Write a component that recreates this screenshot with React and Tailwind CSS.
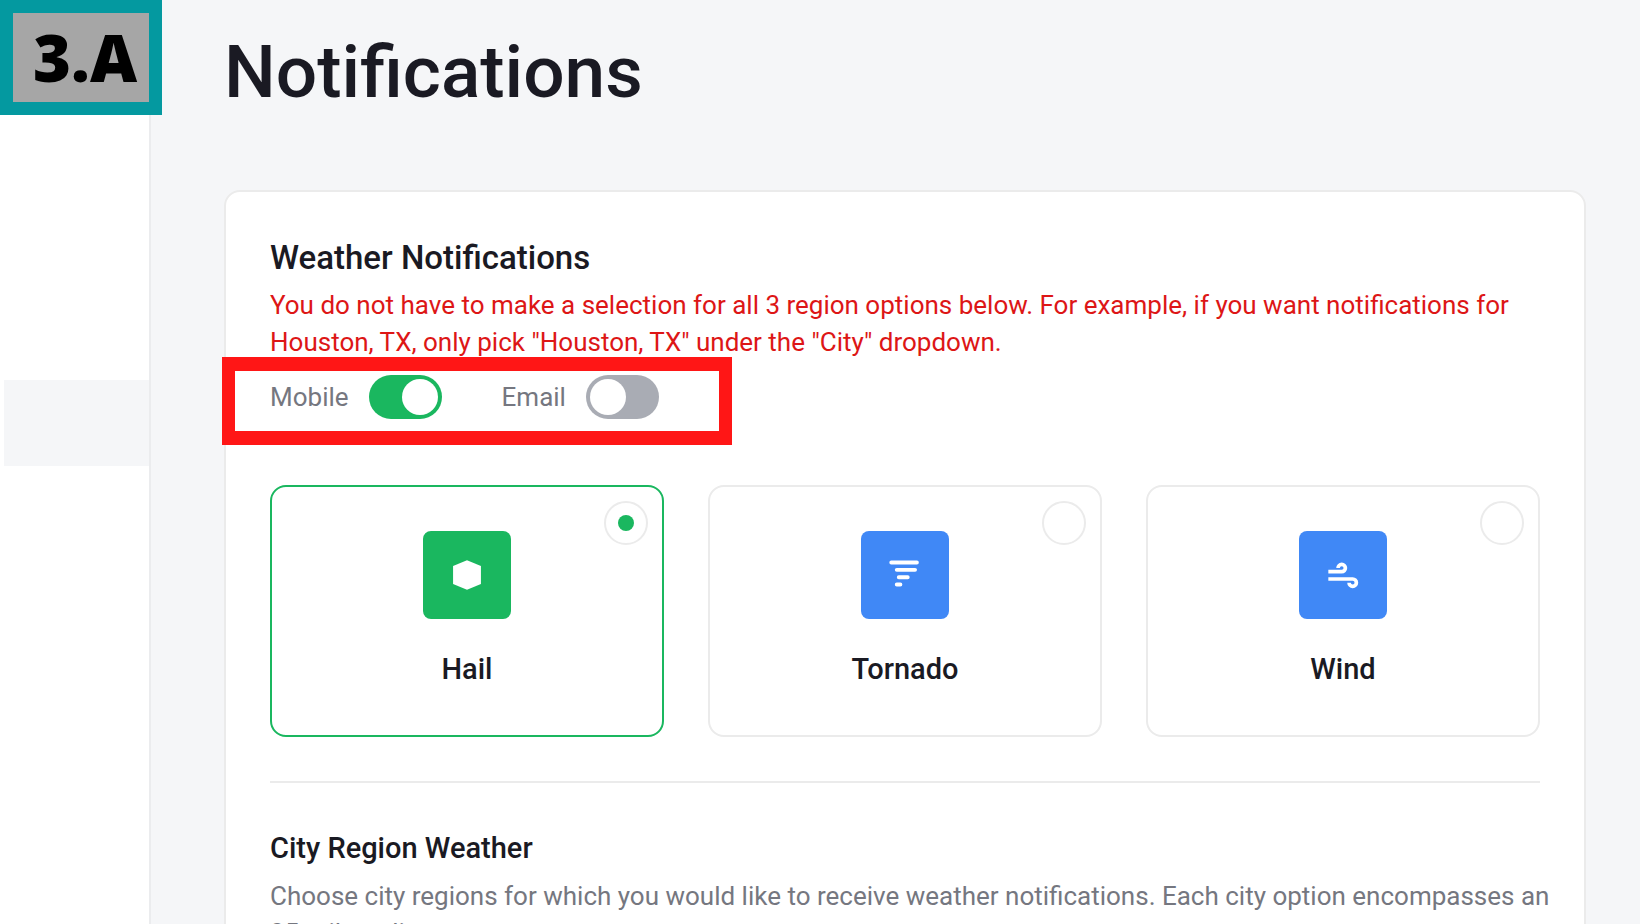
import React, { useState } from "react";

const HailIcon = () => (
  <svg viewBox="0 0 24 24" className="size-11" fill="currentColor" aria-hidden="true">
    <path d="M12 4l7.6 3.1v9.8L12 20l-7.6-3.1V7.1z" />
  </svg>
);

const TornadoIcon = () => (
  <svg
    viewBox="0 0 24 24"
    className="size-11"
    fill="none"
    stroke="currentColor"
    strokeWidth="2.1"
    strokeLinecap="round"
    aria-hidden="true"
  >
    <path d="M4.5 5.2h14M7.5 9.2h10M8.6 13.2h4.9M7.5 17.2h2" />
  </svg>
);

const WindIcon = () => (
  <svg
    viewBox="0 0 24 24"
    className="size-11"
    fill="none"
    stroke="currentColor"
    strokeWidth="2"
    aria-hidden="true"
  >
    <path d="M4 10.2h7.3a2 2 0 1 0-2-2M4 14.2h13.3a2 2 0 1 1-2 2" />
  </svg>
);

const WEATHER_TYPES = [
  { id: "hail", label: "Hail", Icon: HailIcon },
  { id: "tornado", label: "Tornado", Icon: TornadoIcon },
  { id: "wind", label: "Wind", Icon: WindIcon },
];

const Toggle = ({ label, checked, onChange }) => (
  <label className="flex cursor-pointer items-center gap-5">
    <span>{label}</span>
    <input
      type="checkbox"
      role="switch"
      className="peer sr-only"
      checked={checked}
      onChange={(e) => onChange(e.target.checked)}
    />
    <span className="flex h-11 w-[73px] items-center rounded-full bg-[#a9acb4] p-1 peer-checked:justify-end peer-checked:bg-[#1ab75f]">
      <span className="size-9 rounded-full bg-white" />
    </span>
  </label>
);

const WeatherCard = ({ type, selected, onSelect }) => {
  const { id, label, Icon } = type;

  return (
    <label
      className={`relative flex cursor-pointer flex-col items-center rounded-2xl border-2 pt-11 pb-12 ${
        selected ? "border-[#1ab75f]" : "border-[#ebebeb]"
      }`}
    >
      <input
        type="radio"
        name="weatherType"
        value={id}
        className="absolute top-3.5 right-3.5 size-11 appearance-none rounded-full border-2 border-[#ebebeb] bg-white"
        checked={selected}
        onChange={() => onSelect(id)}
      />
      {selected && <span className="absolute top-7 right-7 size-4 rounded-full bg-[#1ab75f]" />}
      <span
        className={`flex size-22 items-center justify-center rounded-lg text-white ${
          selected ? "bg-[#1ab75f]" : "bg-[#4088f6]"
        }`}
      >
        <Icon />
      </span>
      <span className="mt-8 text-[29px] leading-9 font-medium text-[#1a1a23]">{label}</span>
    </label>
  );
};

const App = () => {
  const [mobile, setMobile] = useState(true);
  const [email, setEmail] = useState(false);
  const [weatherType, setWeatherType] = useState("hail");

  return (
    <div className="flex h-screen overflow-hidden bg-[#f5f6f8] font-['Roboto',sans-serif] text-[26px] leading-[37px] text-[#757780]">
      {/* Step badge */}
      <div className="absolute top-0 left-0 border-[13px] border-[#0499a0] bg-[#a6a6a6] pr-3 pl-5 font-['Open_Sans',sans-serif] text-[65px] leading-[89px] font-extrabold text-black">
        3.A
      </div>

      <aside className="w-[151px] shrink-0 border-r-2 border-[#ebecee] bg-white pt-[380px] pl-1">
        <div className="h-[86px] bg-[#f5f6f8]" />
      </aside>

      <main className="min-w-0 flex-1 pt-7 pr-[54px] pl-[73px]">
        <h1 className="text-[73px] leading-[88px] font-medium text-[#1a1a23]">Notifications</h1>

        <section className="mt-[74px] rounded-2xl border-2 border-[#ebebeb] bg-white p-11">
          <h2 className="text-[33px] leading-[43px] font-medium text-[#1a1a23]">Weather Notifications</h2>
          <p className="mt-2 text-[#dd1616]">
            You do not have to make a selection for all 3 region options below. For example, if you want
            notifications for Houston, TX, only pick "Houston, TX" under the "City" dropdown.
          </p>

          <div className="-mx-12 -mt-1 w-fit border-x-[13px] border-y-[14px] border-[#ff1616] pt-1 pr-[60px] pb-3 pl-[35px]">
            <div className="flex gap-15">
              <Toggle label="Mobile" checked={mobile} onChange={setMobile} />
              <Toggle label="Email" checked={email} onChange={setEmail} />
            </div>
          </div>

          <div className="mt-10 grid grid-cols-3 gap-11">
            {WEATHER_TYPES.map((type) => (
              <WeatherCard
                key={type.id}
                type={type}
                selected={weatherType === type.id}
                onSelect={setWeatherType}
              />
            ))}
          </div>

          <hr className="my-11 border-t-2 border-[#ebebeb]" />

          <h3 className="text-[29px] leading-[43px] font-medium text-[#1a1a23]">City Region Weather</h3>
          <p className="-mr-5 mt-2">
            Choose city regions for which you would like to receive weather notifications. Each city option
            encompasses an 25 mile radius.
          </p>
        </section>
      </main>
    </div>
  );
};

export default App;
